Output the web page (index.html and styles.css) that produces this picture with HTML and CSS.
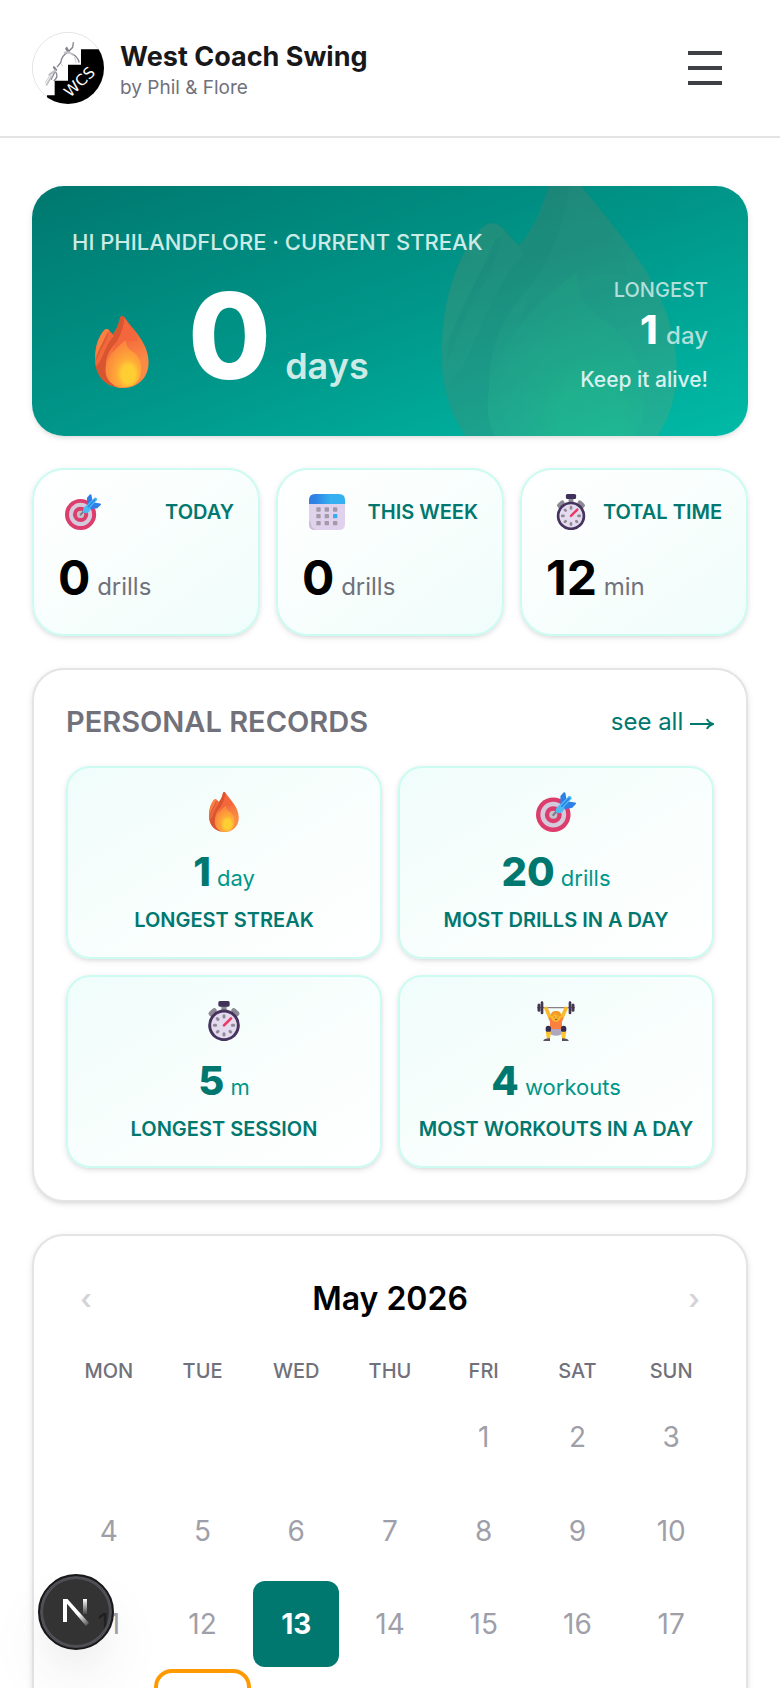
FILE: index.html
```html
<!DOCTYPE html>
<html lang="en">
<head>
<meta charset="utf-8">
<meta name="viewport" content="width=device-width, initial-scale=1">
<title>West Coach Swing</title>
<link rel="stylesheet" href="styles.css">
</head>
<body>
<svg class="sprite" aria-hidden="true">
  <defs>
    <linearGradient id="fl-a" x1="0.4" y1="0" x2="0.7" y2="1"><stop offset="0.2" stop-color="#f0603a"/><stop offset="0.7" stop-color="#fb8a44"/></linearGradient>
    <radialGradient id="fl-b" cx="0.64" cy="0.72" r="0.62"><stop offset="0.3" stop-color="#ffce33"/><stop offset="0.5" stop-color="#ffac38"/><stop offset="1" stop-color="#fb8a3c"/></radialGradient>
    <linearGradient id="cal-a" x1="0" y1="0" x2="1" y2="0"><stop offset="0.15" stop-color="#3080e4"/><stop offset="0.6" stop-color="#36b0f0"/></linearGradient>
    <linearGradient id="nx-a" x1="0" y1="0" x2="0" y2="1"><stop offset="0" stop-color="#fff"/><stop offset="1" stop-color="#fff" stop-opacity="0.1"/></linearGradient>
    <linearGradient id="nx-b" gradientUnits="userSpaceOnUse" x1="16" y1="16" x2="25" y2="27"><stop offset="0" stop-color="#fff"/><stop offset="1" stop-color="#fff" stop-opacity="0.15"/></linearGradient>
    <clipPath id="logo-clip"><circle cx="108" cy="108" r="108"/></clipPath>
  </defs>
  <symbol id="flame" viewBox="-27 0 214 214">
    <path fill="url(#fl-a)" d="M81 0C86 0 88 5 91 9C116 43 159 82 159 138C159 184 126 214 83 214C35 214 0 178 0 124C0 88 12 58 27 42C32 37 38 38 42 43L52 54C64 42 71 20 75 4C76 1 78 0 81 0Z"/>
    <path fill="#d9552f" d="M52 54C66 42 71 20 75 4C79 -2 84 0 87 5C86 36 74 66 56 86C38 106 31 128 32 152C34 180 48 202 66 212C26 205 2 176 0 134C12 108 22 78 46 60Z"/>
    <path fill="#f0683b" d="M52 54L56 60C36 78 28 108 18 128C12 140 6 146 3 150C0 140 0 130 1 120C14 98 20 66 42 44Z"/>
    <path fill="#f98043" d="M27 42C32 37 38 38 42 43C34 72 14 92 1 124C0 88 12 58 27 42Z"/>
    <path fill="#dd5a32" d="M40 48C36 74 16 96 6 128L3 132C6 104 24 80 36 50Z"/>
    <path fill="#f4663b" d="M87 5C104 34 124 54 126 74C100 66 64 92 50 122C54 80 84 60 87 5Z"/>
    <path fill="url(#fl-b)" d="M92 72C66 90 32 122 31 162C31 190 52 212 88 212C122 210 137 188 137 158C137 136 130 118 112 106C100 98 90 90 92 72Z"/>
  </symbol>
  <symbol id="target" viewBox="0 0 118 118">
    <circle cx="51" cy="67" r="51" fill="#dd3d6c"/>
    <circle cx="51" cy="67" r="38" fill="#d3cbdb"/>
    <circle cx="51" cy="67" r="25" fill="#dd3d6c"/>
    <circle cx="51" cy="67" r="12" fill="#c3c0c9"/>
    <path d="M51 68L66 52" stroke="#7b7b88" stroke-width="6" stroke-linecap="round"/>
    <path fill="#2f80e6" d="M72 12L82 1C84 0 86 1 87 4L90 22L72 42ZM76 46L96 28L115 31C118 32 119 34 117 36L106 47L84 50Z"/>
    <path fill="#4cbcf5" d="M72 36L97 12C102 10 107 15 105 20L82 45L84 50C78 62 68 66 60 60C56 54 59 44 72 36Z"/>
    <path d="M76 42L98 19" stroke="#2f80e6" stroke-width="5" stroke-linecap="round"/>
  </symbol>
  <symbol id="calendar" viewBox="0 0 108 108">
    <path fill="#e0d1ec" d="M0 26H108V90Q108 108 90 108H18Q0 108 0 90Z"/>
    <path fill="#c9bed6" d="M0 80V90Q0 108 18 108H22Q5 104 5 84Z"/>
    <path fill="url(#cal-a)" d="M0 30V18Q0 0 18 0H90Q108 0 108 18V30Z"/>
    <g fill="#a19ba9"><rect x="22" y="40" width="13" height="13" rx="2"/><rect x="47" y="40" width="13" height="13" rx="2"/><rect x="72" y="40" width="13" height="13" rx="2"/><rect x="22" y="60" width="13" height="13" rx="2"/><rect x="47" y="60" width="13" height="13" rx="2"/><rect x="22" y="81" width="13" height="13" rx="2"/><rect x="47" y="81" width="13" height="13" rx="2"/><rect x="72" y="81" width="13" height="13" rx="2"/></g>
    <rect x="72" y="60" width="13" height="13" rx="2" fill="#36aef0"/>
  </symbol>
  <symbol id="watch" viewBox="0 0 120 120">
    <path stroke="#8d8a95" stroke-width="15" stroke-linecap="round" d="M21 38L31 29M99 38L89 29"/>
    <rect x="52" y="10" width="16" height="20" fill="#8d8a95"/>
    <rect x="43" y="0" width="34" height="17" rx="5" fill="#40315a"/>
    <circle cx="60" cy="73" r="43" fill="#e4dbee" stroke="#46345f" stroke-width="9"/>
    <path stroke="#8f8a98" stroke-width="9" stroke-linecap="round" d="M60 44V48M60 98V102M31 73H35M85 73H89M40 53L42 55M40 93L42 91M80 93L78 91"/>
    <path stroke="#ea3866" stroke-width="8" stroke-linecap="round" d="M60 73L81 52"/>
  </symbol>
  <symbol id="lifter" viewBox="0 0 120 120">
    <path stroke="#85808c" stroke-width="4" d="M3 20H117"/>
    <path fill="none" stroke="#fdb92c" stroke-width="11" stroke-linecap="round" stroke-linejoin="round" d="M30 22L44 54M90 22L76 54"/>
    <path stroke="#43364f" stroke-width="9" stroke-linecap="round" d="M9 12V28M111 12V28"/>
    <path stroke="#43364f" stroke-width="8" stroke-linecap="round" d="M18 5V36M102 5V36"/>
    <path fill="#fc8040" d="M38 48Q60 60 82 48L78 64V86H42V64Z"/>
    <path fill="#afa7bd" d="M42 84H78L84 92Q76 104 60 104Q44 104 36 92Z"/>
    <path stroke="#352b52" stroke-width="16" stroke-linecap="round" d="M37 82V86M83 82V86"/>
    <path fill="#fdc532" d="M29 92H45L42 114H33ZM75 92H91L87 114H78Z"/>
    <path fill="#5a5060" d="M22 120Q22 112 42 112V120ZM98 120Q98 112 78 112V120Z"/>
    <circle cx="60" cy="46" r="16" fill="#fdb92c"/>
    <path fill="#f59a28" d="M44 46Q44 30 60 30Q76 30 76 46Q62 46 56 36Q54 46 44 46Z"/>
    <path d="M55 47V49M66 47V49M57 55H64" stroke="#7b4a2a" stroke-width="3"/>
  </symbol>
</svg>

<header class="topbar">
  <a class="brand" href="#">
    <svg class="brand-logo" viewBox="0 0 216 216" aria-hidden="true">
      <circle cx="108" cy="108" r="107" fill="#fff" stroke="#d6d8d6" stroke-width="2"/>
      <g clip-path="url(#logo-clip)">
        <path d="M147 52H216V216H45V190H68V146H108V98H147Z"/>
        <g fill="none" stroke="#85838d" stroke-linecap="round">
          <path stroke-width="7" d="M103 50L109 60M66 106L72 114"/>
          <path stroke-width="4" d="M104 46L110 58L122 46L124 32M106 62Q90 70 86 92L76 104M122 66Q138 76 141 90M70 116L58 142M72 122Q80 134 66 146"/>
          <path stroke-width="6" stroke="#c3c1ca" d="M70 116L52 128M58 134L44 158M98 62Q112 58 122 68"/>
          <path stroke-width="2" stroke="#b5b3bb" d="M128 76L132 92M60 120L40 152M88 96L92 102"/>
        </g>
        <text class="logo-text" x="114" y="198" transform="rotate(-43 114 198)">WCS</text>
      </g>
    </svg>
    <span class="brand-copy">
      <span class="brand-name">West Coach Swing</span>
      <span class="brand-by">by Phil &amp; Flore</span>
    </span>
  </a>
  <button class="menu" type="button" aria-label="Open menu">
    <svg viewBox="0 0 34 34" aria-hidden="true"><path d="M0 2H34M0 17H34M0 32H34"/></svg>
  </button>
</header>

<main class="page">
  <section class="hero">
    <svg class="hero-bg" aria-hidden="true"><use href="#flame"/></svg>
    <p class="hero-label">HI PHILANDFLORE · CURRENT STREAK</p>
    <div class="hero-row">
      <svg class="hero-flame" aria-hidden="true"><use href="#flame"/></svg>
      <p class="hero-count"><strong>0</strong> <span>days</span></p>
      <div class="hero-side">
        <p class="side-label">LONGEST</p>
        <p class="side-value"><strong>1</strong> day</p>
        <p class="side-note">Keep it alive!</p>
      </div>
    </div>
  </section>

  <section class="stats">
    <article class="stat">
      <div class="stat-head"><svg class="stat-icon" aria-hidden="true"><use href="#target"/></svg><h3>TODAY</h3></div>
      <p class="stat-value"><strong>0</strong> drills</p>
    </article>
    <article class="stat">
      <div class="stat-head"><svg class="stat-icon" aria-hidden="true"><use href="#calendar"/></svg><h3>THIS WEEK</h3></div>
      <p class="stat-value"><strong>0</strong> drills</p>
    </article>
    <article class="stat">
      <div class="stat-head"><svg class="stat-icon" aria-hidden="true"><use href="#watch"/></svg><h3>TOTAL TIME</h3></div>
      <p class="stat-value"><strong>12</strong> min</p>
    </article>
  </section>

  <section class="panel">
    <div class="panel-head">
      <h2>PERSONAL RECORDS</h2>
      <a href="#">see all <svg viewBox="0 0 24 12" aria-hidden="true"><path d="M0 6H22M17 1Q18 4 23 6Q18 8 17 11"/></svg></a>
    </div>
    <div class="records">
      <article class="record">
        <svg class="record-icon" aria-hidden="true"><use href="#flame"/></svg>
        <p class="record-value"><strong>1</strong> day</p>
        <h3>LONGEST STREAK</h3>
      </article>
      <article class="record">
        <svg class="record-icon" aria-hidden="true"><use href="#target"/></svg>
        <p class="record-value"><strong>20</strong> drills</p>
        <h3>MOST DRILLS IN A DAY</h3>
      </article>
      <article class="record">
        <svg class="record-icon" aria-hidden="true"><use href="#watch"/></svg>
        <p class="record-value"><strong>5</strong> m</p>
        <h3>LONGEST SESSION</h3>
      </article>
      <article class="record">
        <svg class="record-icon" aria-hidden="true"><use href="#lifter"/></svg>
        <p class="record-value"><strong>4</strong> workouts</p>
        <h3>MOST WORKOUTS IN A DAY</h3>
      </article>
    </div>
  </section>

  <section class="panel">
    <div class="month">
      <button type="button" aria-label="Previous month">‹</button>
      <h2>May 2026</h2>
      <button type="button" aria-label="Next month">›</button>
    </div>
    <div class="weekdays">
      <span>MON</span><span>TUE</span><span>WED</span><span>THU</span><span>FRI</span><span>SAT</span><span>SUN</span>
    </div>
    <div class="days">
      <button class="day first" type="button">1</button>
      <button class="day" type="button">2</button>
      <button class="day" type="button">3</button>
      <button class="day" type="button">4</button>
      <button class="day" type="button">5</button>
      <button class="day" type="button">6</button>
      <button class="day" type="button">7</button>
      <button class="day" type="button">8</button>
      <button class="day" type="button">9</button>
      <button class="day" type="button">10</button>
      <button class="day" type="button">11</button>
      <button class="day" type="button">12</button>
      <button class="day today" type="button">13</button>
      <button class="day" type="button">14</button>
      <button class="day" type="button">15</button>
      <button class="day" type="button">16</button>
      <button class="day" type="button">17</button>
      <button class="day marked" type="button" aria-label="Tuesday"></button>
    </div>
  </section>
</main>

<button class="dev-badge" type="button" aria-label="Open developer tools">
  <svg viewBox="0 0 26 28" aria-hidden="true">
    <path fill="none" stroke="#fff" stroke-width="4" d="M2 24V1"/>
    <path fill="url(#nx-b)" d="M0 1H4.500L26 25L23 28Z"/>
    <rect x="20" y="1" width="4" height="15" fill="url(#nx-a)"/>
  </svg>
</button>
</body>
</html>
```
FILE: styles.css
```css
:root {
  --teal-700: #00786f;
  --teal-600: #009689;
  --teal-500: #00bba7;
  --teal-100: #cbfbf1;
  --teal-50: #f0fdfa;
  --gray-200: #e4e4e7;
  --gray-400: #9f9fa9;
  --gray-500: #71717b;
  --shadow: 0 2px 6px rgba(0, 0, 0, 0.1), 0 2px 4px -2px rgba(0, 0, 0, 0.1);
}

* {
  box-sizing: border-box;
  margin: 0;
  padding: 0;
}

body {
  height: 100vh;
  overflow: hidden;
  background: #fff;
  color: #000;
  font-family: Inter, "Liberation Sans", sans-serif;
}

button {
  border: 0;
  background: none;
  font: inherit;
  cursor: pointer;
}

a {
  color: inherit;
  text-decoration: none;
}

.sprite {
  position: absolute;
  width: 0;
  height: 0;
}

.topbar {
  display: flex;
  align-items: center;
  justify-content: space-between;
  padding: 32px;
  border-bottom: 2px solid var(--gray-200);
}

.brand {
  display: flex;
  align-items: center;
  gap: 16px;
}

.brand-logo {
  width: 72px;
  height: 72px;
}

.logo-text {
  fill: #fff;
  font-family: "DejaVu Sans", sans-serif;
  font-size: 46px;
}

.brand-copy {
  display: flex;
  flex-direction: column;
  padding-top: 4px;
}

.brand-name {
  color: #18181b;
  font-size: 27px;
  font-weight: 700;
  line-height: 36px;
}

.brand-by {
  color: var(--gray-500);
  font-size: 19px;
  line-height: 26px;
}

.menu {
  display: flex;
  padding: 16px 26px;
}

.menu svg {
  width: 34px;
  height: 34px;
  fill: none;
  stroke: #3f3f46;
  stroke-width: 4;
}

.page {
  display: flex;
  flex-direction: column;
  gap: 32px;
  padding: 48px 32px;
}

.hero {
  position: relative;
  overflow: hidden;
  padding: 40px;
  border-radius: 32px;
  background: linear-gradient(to bottom right, var(--teal-700), var(--teal-600), var(--teal-500));
  box-shadow: var(--shadow);
  color: #fff;
}

.hero-bg {
  position: absolute;
  top: -20px;
  right: 30px;
  width: 316px;
  height: 316px;
  opacity: 0.12;
}

.hero-label {
  position: relative;
  margin-bottom: 18px;
  color: #cceae6;
  font-size: 22px;
  font-weight: 500;
  line-height: 32px;
}

.hero-row {
  position: relative;
  display: flex;
  align-items: flex-end;
}

.hero-flame {
  width: 72px;
  height: 72px;
  margin: 0 30px 8px 14px;
}

.hero-count {
  font-size: 36px;
  line-height: 1;
}

.hero-count strong {
  font-size: 120px;
  font-weight: 800;
  line-height: 120px;
}

.hero-count span {
  margin-left: 4px;
  color: #cceae6;
  font-weight: 600;
}

.hero-side {
  margin-left: auto;
  color: #b3dfda;
  text-align: right;
}

.side-label {
  font-size: 20px;
  font-weight: 500;
  line-height: 28px;
}

.side-value {
  margin-bottom: 8px;
  font-size: 24px;
  font-weight: 500;
  line-height: 1;
}

.side-value strong {
  margin-right: 2px;
  color: #fff;
  font-size: 40px;
  font-weight: 800;
  line-height: 52px;
}

.side-note {
  color: #d9f1ee;
  font-size: 21px;
  font-weight: 500;
  line-height: 32px;
}

.stats {
  display: grid;
  grid-template-columns: repeat(3, 1fr);
  gap: 16px;
}

.stat {
  padding: 24px;
  border: 2px solid var(--teal-100);
  border-radius: 32px;
  background: linear-gradient(to bottom right, #fff, var(--teal-50));
  box-shadow: var(--shadow);
}

.stat-head {
  display: flex;
  align-items: center;
  justify-content: space-between;
  margin-bottom: 16px;
}

.stat-icon {
  width: 36px;
  height: 36px;
  margin-left: 7px;
}

.stat h3,
.record h3 {
  color: var(--teal-700);
  font-size: 20px;
  font-weight: 600;
  line-height: 32px;
  white-space: nowrap;
}

.stat-value {
  color: var(--gray-500);
  font-size: 24px;
  line-height: 1;
}

.stat-value strong {
  color: #000;
  font-size: 48px;
  font-weight: 700;
  line-height: 64px;
}

.panel {
  padding: 32px;
  border: 2px solid var(--gray-200);
  border-radius: 32px;
  background: #fff;
  box-shadow: var(--shadow);
}

.panel-head {
  display: flex;
  align-items: center;
  justify-content: space-between;
  margin-bottom: 24px;
  line-height: 40px;
}

.panel-head h2 {
  color: var(--gray-500);
  font-size: 29px;
  font-weight: 600;
}

.panel-head a {
  color: var(--teal-700);
  font-size: 24px;
}

.panel-head svg {
  width: 24px;
  height: 12px;
  fill: none;
  stroke: currentColor;
  stroke-width: 2;
}

.records {
  display: grid;
  grid-template-columns: 1fr 1fr;
  gap: 16px;
}

.record {
  display: flex;
  flex-direction: column;
  align-items: center;
  padding: 24px 16px 21px;
  border: 2px solid var(--teal-100);
  border-radius: 24px;
  background: linear-gradient(to bottom right, var(--teal-50), #fff);
  box-shadow: var(--shadow);
}

.record-icon {
  width: 40px;
  height: 40px;
  margin-bottom: 16px;
}

.record-value {
  margin-bottom: 8px;
  color: var(--teal-600);
  font-size: 22px;
  line-height: 1;
}

.record-value strong {
  color: var(--teal-700);
  font-size: 40px;
  font-weight: 800;
  line-height: 48px;
}

.month {
  display: flex;
  align-items: center;
  justify-content: space-between;
  margin-bottom: 24px;
  line-height: 62px;
}

.month h2 {
  font-size: 32px;
  font-weight: 600;
}

.month button {
  width: 40px;
  color: #d4d4d8;
  font-size: 28px;
  font-weight: 600;
}

.weekdays,
.days {
  display: grid;
  grid-template-columns: repeat(7, 1fr);
  gap: 8px;
}

.weekdays {
  margin-bottom: 6px;
  color: var(--gray-500);
  font-size: 20px;
  font-weight: 500;
  line-height: 34px;
  text-align: center;
}

.day {
  aspect-ratio: 1;
  border-radius: 12px;
  color: var(--gray-400);
  font-size: 28px;
}

.day.first {
  grid-column: 5;
}

.day.today {
  background: var(--teal-700);
  color: #fff;
  font-weight: 700;
}

.day.marked {
  grid-column: 2;
  outline: 4px solid #fe9a00;
  outline-offset: 2px;
}

.dev-badge {
  position: fixed;
  bottom: 38px;
  left: 38px;
  display: flex;
  align-items: center;
  justify-content: center;
  width: 76px;
  height: 76px;
  border: 2px solid #18181b;
  border-radius: 50%;
  background: rgba(0, 0, 0, 0.8);
  box-shadow: inset 0 0 0 3px #504f55, 0 32px 64px rgba(0, 0, 0, 0.06), 0 16px 32px rgba(0, 0, 0, 0.03);
}

.dev-badge svg {
  width: 26px;
  height: 28px;
}
```
